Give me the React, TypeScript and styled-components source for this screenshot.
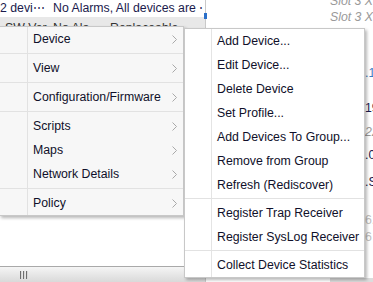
import React from "react";
import styled, { createGlobalStyle } from "styled-components";

const GlobalStyle = createGlobalStyle`
  html, body {
    margin: 0;
    padding: 0;
    width: 373px;
    height: 282px;
    overflow: hidden;
    background: #fff;
  }
  body {
    font-family: "Liberation Sans", Arial, sans-serif;
  }
`;

type MenuEntry = { label: string; sub?: boolean } | "sep";

const mainItems: MenuEntry[] = [
  { label: "Device", sub: true },
  "sep",
  { label: "View", sub: true },
  "sep",
  { label: "Configuration/Firmware", sub: true },
  "sep",
  { label: "Scripts", sub: true },
  { label: "Maps", sub: true },
  { label: "Network Details", sub: true },
  "sep",
  { label: "Policy", sub: true },
];

const deviceItems: MenuEntry[] = [
  { label: "Add Device..." },
  { label: "Edit Device..." },
  { label: "Delete Device" },
  { label: "Set Profile..." },
  { label: "Add Devices To Group..." },
  { label: "Remove from Group" },
  { label: "Refresh (Rediscover)" },
  "sep",
  { label: "Register Trap Receiver" },
  { label: "Register SysLog Receiver" },
  "sep",
  { label: "Collect Device Statistics" },
];

// fragments of the device table peeking out right of the submenu
const rightCells = [
  { text: ".1", h: 35, tone: "blue" },
  { text: "19", h: 24, tone: "dark" },
  { text: "22", h: 23, tone: "gray" },
  { text: ".0", h: 27, tone: "dark" },
  { text: ".S", h: 38, tone: "dark" },
  { text: "6.", h: 17, tone: "light" },
  { text: "6", h: 20, tone: "light" },
];

const Chevron = () => (
  <svg width="5" height="9" viewBox="0 0 5 9">
    <polyline
      points="0.5,0.5 4.5,4.5 0.5,8.5"
      fill="none"
      stroke="#a9a9a9"
      strokeWidth="1"
    />
  </svg>
);

const Menu = ({ items, tight }: { items: MenuEntry[]; tight?: boolean }) => (
  <>
    {items.map((item, i) =>
      item === "sep" ? (
        <Separator key={i} $tight={tight} />
      ) : (
        <Item key={i}>
          <Label>{item.label}</Label>
          {item.sub && (
            <ArrowBox>
              <Chevron />
            </ArrowBox>
          )}
        </Item>
      )
    )}
  </>
);

const App = () => {
  return (
    <>
      <GlobalStyle />
      <Screen>
        <LeftPane>
          <StatusRow>
            <StatusCell $w={53}>2 devi⋯</StatusCell>
            <StatusCell $w={150}>No Alarms, All devices are ⋯</StatusCell>
          </StatusRow>
          <HeaderRow>
            <HeaderCell $w={48}>SW Ver</HeaderCell>
            <HeaderCell $w={57}>No Ala</HeaderCell>
            <HeaderCell $w={95}>Replaceable</HeaderCell>
          </HeaderRow>
          <TableBody />
          <HScroll>
            <Grip>
              <GripBar />
              <GripBar />
              <GripBar />
            </Grip>
          </HScroll>
          <SplitMark />
        </LeftPane>
        <RightPane>
          <SlotLine>Slot 3 X</SlotLine>
          <SlotLine>Slot 3 X</SlotLine>
          <RightBody>
            {rightCells.map((c, i) => (
              <RightCell key={i} $h={c.h} $tone={c.tone}>
                {c.text}
              </RightCell>
            ))}
          </RightBody>
          <RightScroll />
        </RightPane>

        <MainMenu>
          <Menu items={mainItems} />
        </MainMenu>
        <SubMenu>
          <Menu items={deviceItems} tight />
        </SubMenu>
      </Screen>
    </>
  );
};

export default App;

const Screen = styled.div`
  position: relative;
  width: 373px;
  height: 282px;
  display: flex;
  overflow: hidden;
  background: #fff;
  font-size: 12.3px;
`;

const LeftPane = styled.div`
  position: relative;
  width: 205px;
  flex-shrink: 0;
  display: flex;
  flex-direction: column;
  border-right: 1px solid #c9c9c9;
`;

const StatusRow = styled.div`
  height: 17px;
  display: flex;
  align-items: center;
  color: #1b1b4d;
  white-space: nowrap;
  padding-bottom: 2px;
  box-sizing: border-box;
`;

const StatusCell = styled.div<{ $w: number }>`
  width: ${(p) => p.$w}px;
  overflow: hidden;
`;

const HeaderRow = styled.div`
  height: 20px;
  display: flex;
  align-items: flex-start;
  padding: 4px 0 0 5px;
  box-sizing: border-box;
  background: #e8e8e8;
  border-bottom: 1px solid #d0d0d0;
  color: #333;
  white-space: nowrap;
`;

const HeaderCell = styled.div<{ $w: number }>`
  width: ${(p) => p.$w}px;
  overflow: hidden;
`;

const TableBody = styled.div`
  flex: 1;
  background: #fff;
`;

const HScroll = styled.div`
  height: 15px;
  display: flex;
  align-items: center;
  padding-left: 20px;
  border-top: 1px solid #a9a9a9;
  background: linear-gradient(#f5f5f5, #d9d9d9);
`;

const Grip = styled.div`
  display: flex;
  gap: 1px;
  height: 8px;
`;

const GripBar = styled.div`
  width: 2px;
  height: 8px;
  background: linear-gradient(to right, #6e6e6e 50%, #d8d8d8 50%);
`;

const SplitMark = styled.div`
  position: absolute;
  right: -2px;
  top: 13px;
  width: 3px;
  height: 6px;
  background: #2a6fc9;
`;

const RightPane = styled.div`
  flex: 1;
  display: flex;
  flex-direction: column;
  background: #fff;
  padding-left: 124px;
  margin-top: -7px;
  white-space: nowrap;
  overflow: hidden;
`;

const SlotLine = styled.div`
  height: 16px;
  line-height: 16px;
  color: #9a9a9a;
  font-style: italic;
`;

const RightBody = styled.div`
  flex: 1;
  padding-left: 35px;
  padding-top: 41px;
`;

const toneColor: Record<string, string> = {
  blue: "#3d7cc4",
  dark: "#1b1b4d",
  gray: "#9a9a9a",
  light: "#c0c0c0",
};

const RightCell = styled.div<{ $h: number; $tone: string }>`
  height: ${(p) => p.$h}px;
  line-height: 14px;
  color: ${(p) => toneColor[p.$tone]};
  font-style: ${(p) => (p.$tone === "gray" ? "italic" : "normal")};
`;

const RightScroll = styled.div`
  height: 4px;
  background: #dcdcdc;
`;

const MenuPanel = styled.div`
  position: absolute;
  box-sizing: border-box;
  border: 1px solid #c8c8c8;
  box-shadow: 2px 2px 3px rgba(0, 0, 0, 0.28);
  color: #10102a;
  white-space: nowrap;
`;

const MainMenu = styled(MenuPanel)`
  left: -1px;
  top: 26px;
  width: 185px;
  background: linear-gradient(
      to right,
      transparent 27px,
      #e2e2e2 27px,
      #e2e2e2 28px,
      transparent 28px
    ),
    #f7f7f7;
`;

const SubMenu = styled(MenuPanel)`
  left: 184px;
  top: 28px;
  width: 181px;
  background: linear-gradient(
      to right,
      transparent 26px,
      #e4e4e4 26px,
      #e4e4e4 27px,
      transparent 27px
    ),
    #ffffff;
`;

const Item = styled.div`
  height: 24px;
  display: flex;
  align-items: center;
  padding-left: 33px;
  ${SubMenu} & {
    padding-left: 32px;
  }
`;

const Label = styled.span`
  flex: 1;
`;

const ArrowBox = styled.span`
  display: flex;
  align-items: center;
  margin-right: 6px;
`;

const Separator = styled.div<{ $tight?: boolean }>`
  height: 1px;
  margin: ${(p) => (p.$tight ? "1px 0 2px" : "2px 0")};
  background: #e2e2e2;
`;
